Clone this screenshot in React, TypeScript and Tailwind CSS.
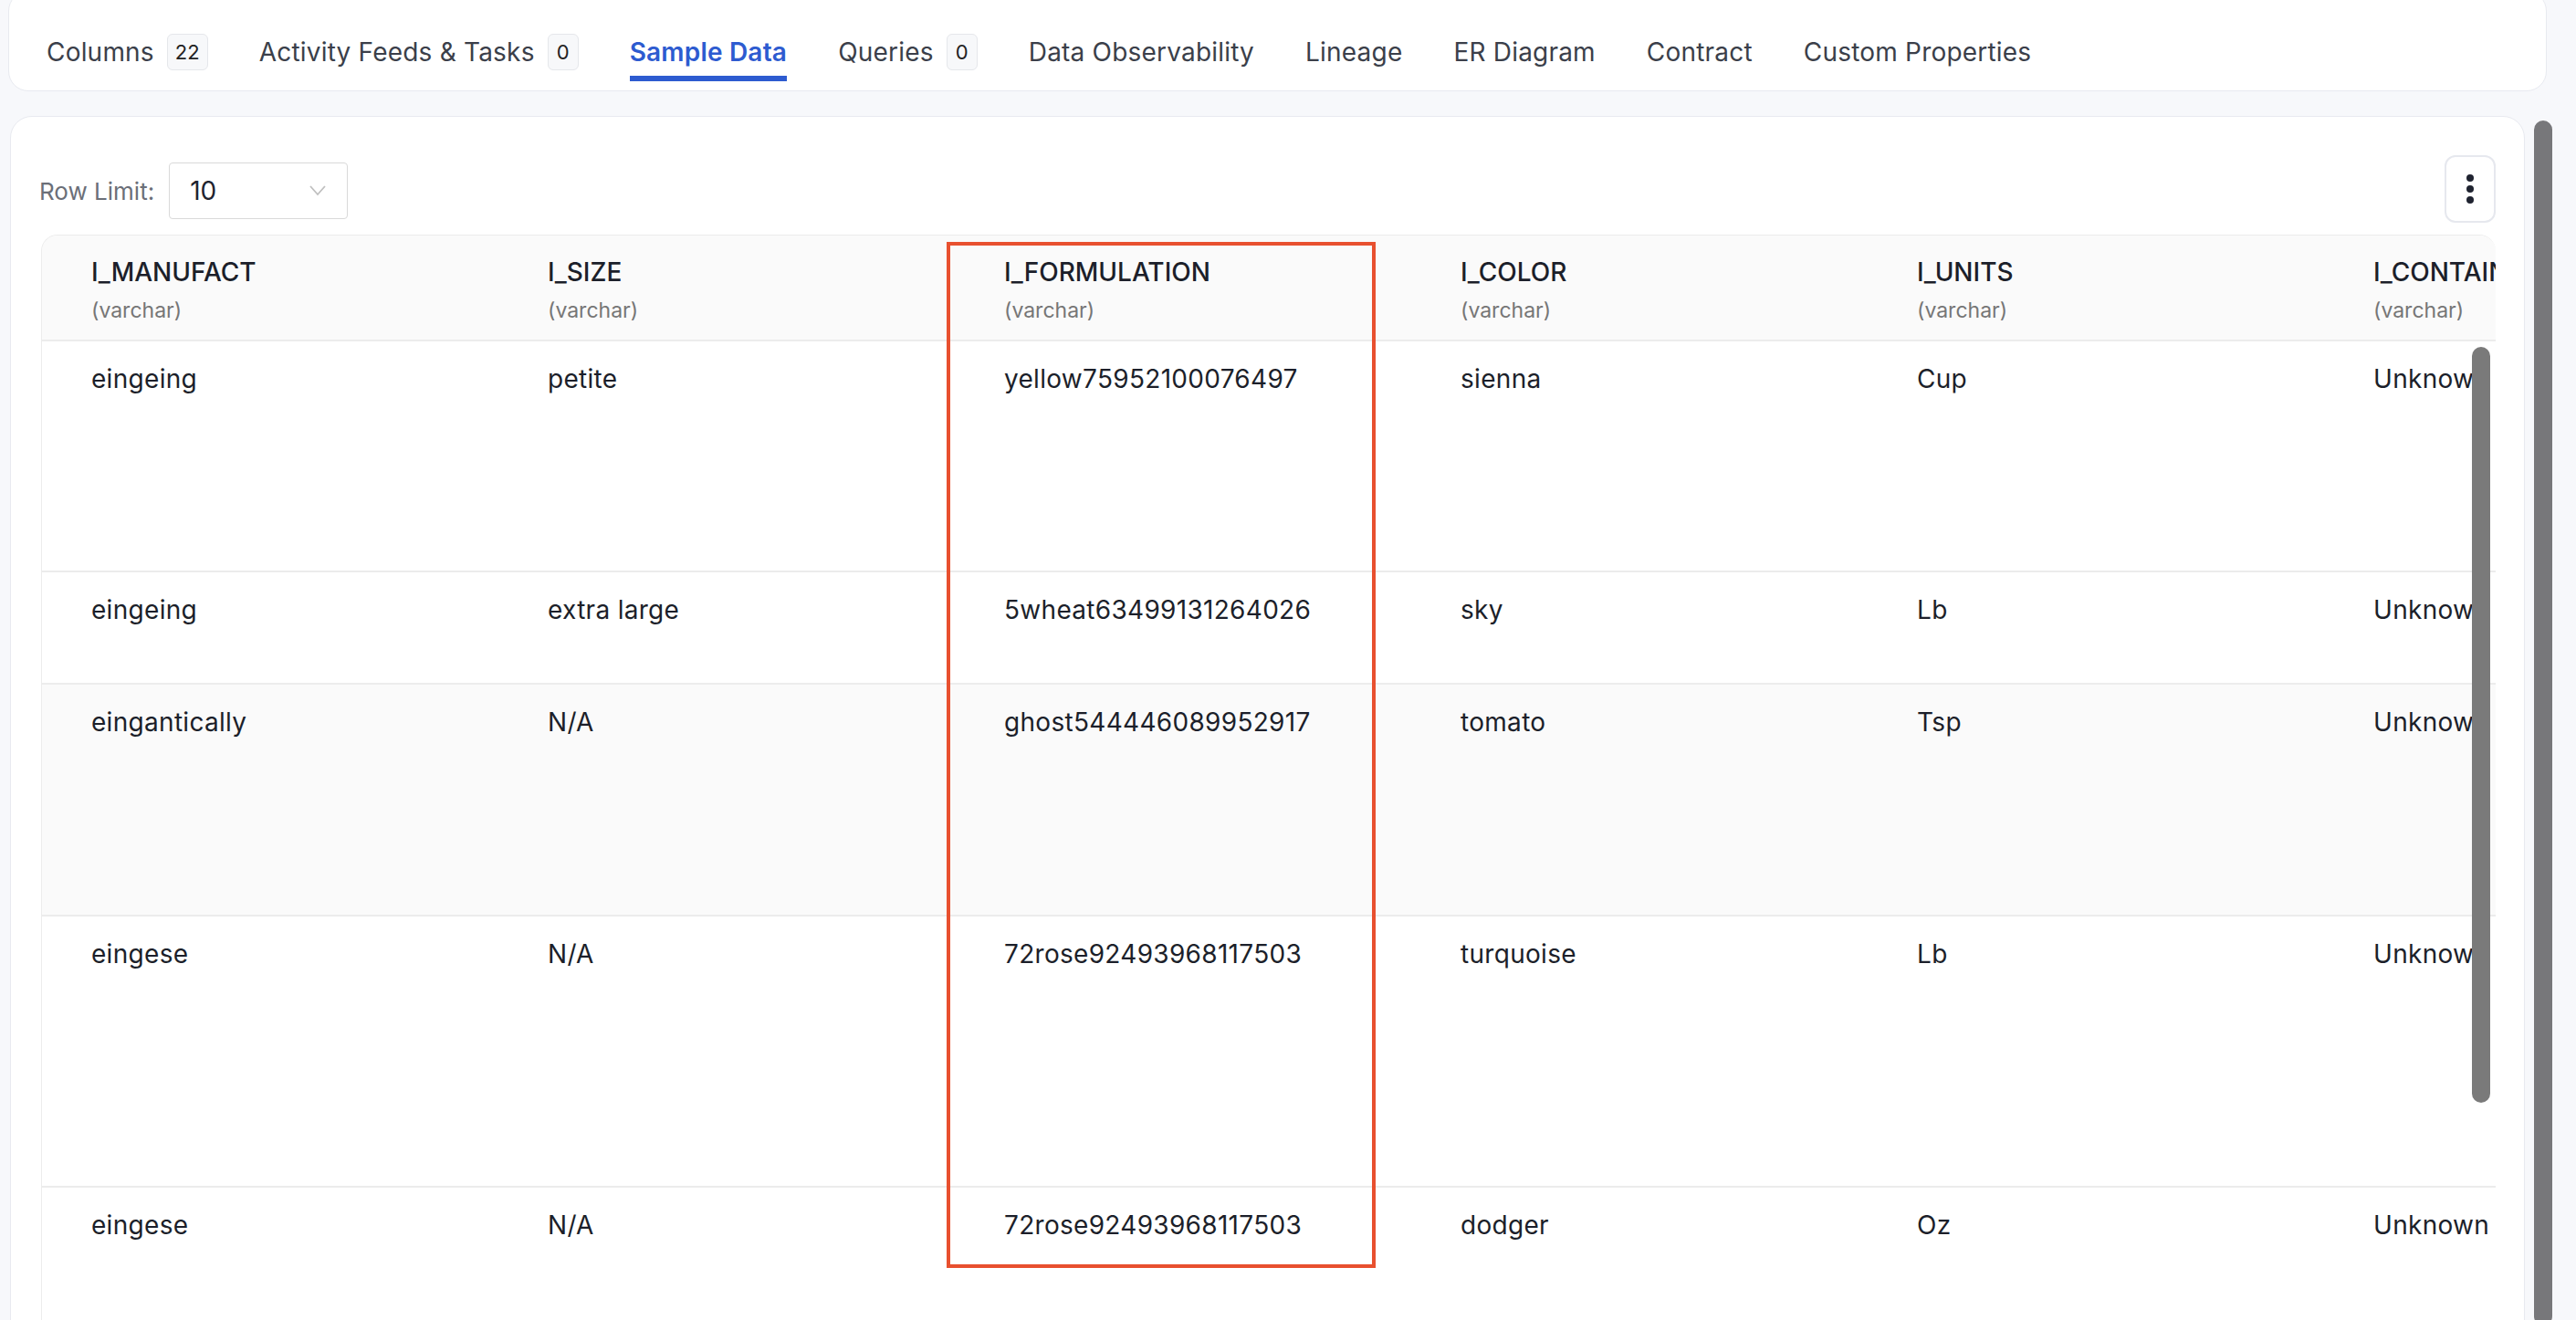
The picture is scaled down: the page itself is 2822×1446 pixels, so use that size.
import React from "react";

const tabs: { label: string; badge?: string; active?: boolean }[] = [
  { label: "Columns", badge: "22" },
  { label: "Activity Feeds & Tasks", badge: "0" },
  { label: "Sample Data", active: true },
  { label: "Queries", badge: "0" },
  { label: "Data Observability" },
  { label: "Lineage" },
  { label: "ER Diagram" },
  { label: "Contract" },
  { label: "Custom Properties" },
];

const cols = ["I_MANUFACT", "I_SIZE", "I_FORMULATION", "I_COLOR", "I_UNITS", "I_CONTAINER"];
const rows: { cells: string[]; h: string; gray?: boolean }[] = [
  { cells: ["eingeing", "petite", "yellow75952100076497", "sienna", "Cup", "Unknown"], h: "h-[253px]" },
  { cells: ["eingeing", "extra large", "5wheat63499131264026", "sky", "Lb", "Unknown"], h: "h-[123px]" },
  { cells: ["eingantically", "N/A", "ghost544446089952917", "tomato", "Tsp", "Unknown"], h: "h-[254px]", gray: true },
  { cells: ["eingese", "N/A", "72rose92493968117503", "turquoise", "Lb", "Unknown"], h: "h-[297px]" },
  { cells: ["eingese", "N/A", "72rose92493968117503", "dodger", "Oz", "Unknown"], h: "h-[200px]" },
];

export default function App() {
  return (
    <div className="w-[2822px] h-[1446px] overflow-hidden bg-[#f7f8fb] relative" style={{ fontFamily: "Inter, 'Noto Sans', sans-serif" }}>
      {/* tab bar */}
      <div className="absolute left-[9px] right-[32px] top-[-10px] h-[110px] bg-white rounded-[22px] border border-[#e8eaf0] flex items-end pb-[18px] pl-[41px] gap-[56px]">
        {tabs.map((t) => (
          <div key={t.label} className="flex flex-col relative">
            <div className="flex items-center gap-[14px] h-[48px]">
              <span className={`text-[28px] tracking-[0.2px] ${t.active ? "text-[#2d5bd0] font-semibold" : "text-[#3b3f4a]"}`}>{t.label}</span>
              {t.badge && (
                <span className="h-[40px] min-w-[34px] px-[8px] flex items-center justify-center text-[22px] text-[#222] bg-[#f7f8fa] border border-[#e5e7eb] rounded-[6px]">{t.badge}</span>
              )}
            </div>
            {t.active && <div className="absolute left-0 right-0 bottom-[-8px] h-[6px] bg-[#2d5bd0]" />}
          </div>
        ))}
      </div>

      {/* main card */}
      <div className="absolute left-[11px] top-[127px] w-[2755px] h-[1400px] bg-white rounded-[24px] border border-[#e8eaf0]">
        <div className="flex items-center justify-between pl-[31px] pr-[31px] pt-[42px]">
          <div className="flex items-center gap-[16px] mt-[4px]">
            <span className="text-[26px] text-[#6b6f78]">Row Limit:</span>
            <div className="w-[196px] h-[62px] border border-[#d9d9d9] rounded-[4px] flex items-center justify-between px-[22px]">
              <span className="text-[28px] text-[#1f2330]">10</span>
              <svg width="20" height="14" viewBox="0 0 20 14"><path d="M2 2 L10 11 L18 2" fill="none" stroke="#bfbfbf" strokeWidth="1.8" /></svg>
            </div>
          </div>
          <div className="w-[56px] h-[74px] border-2 border-[#e6e8ee] rounded-[12px] flex flex-col items-center justify-center gap-[4px]">
            <span className="w-[8px] h-[8px] rounded-full bg-[#1f2330]" />
            <span className="w-[8px] h-[8px] rounded-full bg-[#1f2330]" />
            <span className="w-[8px] h-[8px] rounded-full bg-[#1f2330]" />
          </div>
        </div>

        {/* table */}
        <div className="absolute left-[33px] top-[129px] w-[2689px] h-[1300px] overflow-hidden rounded-t-[18px] border-t border-l border-[#ececec] shadow-[inset_12px_0_10px_-10px_rgba(0,0,0,0.08)]">
          <div className="w-[3000px]">
            <div className="flex h-[116px] bg-[#fafafa] border-b-2 border-[#ececec]">
              {cols.map((c) => (
                <div key={c} className="w-[500px] shrink-0 pl-[54px] pt-[19px]">
                  <div className="text-[28px] font-medium text-[#1c1f2a] whitespace-nowrap">{c}</div>
                  <div className="text-[23px] text-[#767676] mt-[4px]">(varchar)</div>
                </div>
              ))}
            </div>
            {rows.map((r, i) => (
              <div key={i} className={`flex ${r.h} border-b-2 border-[#ececec] ${r.gray ? "bg-[#fafafa]" : "bg-white"}`}>
                {r.cells.map((c, j) => (
                  <div key={j} className="w-[500px] shrink-0 pl-[54px] pt-[20px] text-[28px] tracking-[0.3px] text-[#1c1f2a]">{c}</div>
                ))}
              </div>
            ))}
          </div>
          <div className="absolute right-[6px] top-[122px] w-[20px] h-[828px] rounded-full bg-[#7a7a7a]" />
        </div>

        {/* highlight box */}
        <div className="absolute left-[1025px] top-[137px] w-[470px] h-[1124px] border-[4px] border-[#e8502f]" />
      </div>

      {/* page scrollbar */}
      <div className="absolute left-[2776px] top-[132px] w-[20px] h-[1320px] rounded-full bg-[#77777a]" />
    </div>
  );
}
